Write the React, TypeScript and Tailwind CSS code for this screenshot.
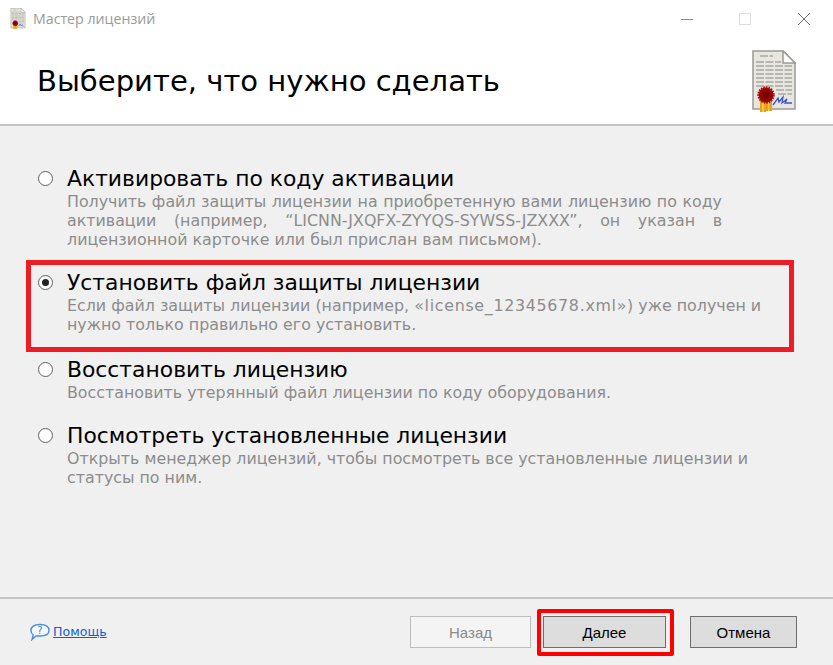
import React from "react";

const body = "font-['DejaVu_Sans',sans-serif]";
const ui = "font-['Liberation_Sans',sans-serif]";

const DocIcon = ({ small = false }: { small?: boolean }) => (
  <svg width={small ? 16 : 44} height={small ? 21 : 62} viewBox="0 0 44 62">
    <path d="M1 1H31L43 13V59H1Z" fill="#e8e6e1" stroke="#9a9a96" strokeWidth="1.5" />
    <path d="M31 1V13H43Z" fill="#fff" stroke="#9a9a96" strokeWidth="1.5" />
    <path d="M8 6H21M4 12H29M4 16H40M4 20H40M4 24H40M4 28H40M4 32H40M4 36H40M24 40H40M26 44H40" stroke="#8a8882" strokeWidth="1.2" strokeDasharray="8 1.5" />
    <path d="M8 48H14V62H8ZM14 48H20V61H14Z" fill="#f19a1c" />
    <path d="M10 48H12V62H10ZM16 48H17.5V61H16Z" fill="#e6d23b" />
    <circle cx="14" cy="45" r="7.5" fill="#8f0606" stroke="#a80c0c" strokeWidth="2.5" strokeDasharray="1.5 1" />
    <circle cx="14" cy="45" r="3" fill="#760404" />
    <path d="M21 55L26 48L27 52L31 47L30 53L35 49L33 53H40" fill="none" stroke="#3c55c8" strokeWidth="1.3" />
  </svg>
);

const Radio = ({ checked = false }: { checked?: boolean }) => (
  <span className="ml-[2px] flex h-[15px] w-[15px] shrink-0 items-center justify-center rounded-full border border-[#5f5f5f] bg-white">
    {checked && <span className="h-[7px] w-[7px] rounded-full bg-[#222]" />}
  </span>
);

const Option = ({
  title,
  checked,
  className,
  children,
}: {
  title: string;
  checked?: boolean;
  className?: string;
  children: React.ReactNode;
}) => (
  <div className={`flex ${className ?? ""}`}>
    <div className="flex h-[27px] w-[31px] shrink-0 items-center">
      <Radio checked={checked} />
    </div>
    <div className="min-w-0 flex-1">
      <div className="h-[27px] text-[21.85px] leading-[27px] text-black whitespace-nowrap">{title}</div>
      <div className="text-[15.85px] leading-[19px] text-[#8c8c8c]">{children}</div>
    </div>
  </div>
);

const Button = ({ label, className }: { label: string; className: string }) => (
  <button className={`h-[32px] border pt-[2px] text-[15px] ${ui} ${className}`}>{label}</button>
);

export default function App() {
  return (
    <div className={`flex h-[665px] w-[833px] flex-col overflow-hidden bg-[#f0f0f0] ${body}`}>
      {/* Title bar */}
      <div className="h-[126px] shrink-0 border-b-2 border-[#c4c4c4] bg-white">
        <div className="flex h-[37px] items-center pl-[10px]">
          <DocIcon small />
          <span className="ml-[7px] font-['Open_Sans',sans-serif] text-[14.2px] text-[#9a9a9a]">Мастер лицензий</span>
          <div className="ml-auto flex items-center">
            <svg width="12" height="12" viewBox="0 0 12 12" className="mr-[46px]"><path d="M0 6.5H12" stroke="#8e8e8e" /></svg>
            <span className="mr-[47px] h-[12px] w-[12px] border border-[#dedede]" />
            <svg width="12" height="12" viewBox="0 0 12 12" className="mr-[23px]"><path d="M0 0L12 12M12 0L0 12" stroke="#6f6f6f" /></svg>
          </div>
        </div>
        <div className="flex pl-[37px] pr-[37px]">
          <h1 className="mt-[26px] text-[29.05px] leading-[36px] font-normal text-black">Выберите, что нужно сделать</h1>
          <div className="ml-auto mt-[13px]"><DocIcon /></div>
        </div>
      </div>

      {/* Options */}
      <div className="flex-1 pl-[36px] pr-[71px] pt-[39px]">
        <Option title="Активировать по коду активации">
          <p className="w-[655px] text-justify">
            Получить файл защиты лицензии на приобретенную вами лицензию по коду активации (например, “LICNN-JXQFX-ZYYQS-SYWSS-JZXXX”, он указан в лицензионной карточке или был прислан вам письмом).
          </p>
        </Option>
        <div className="relative mt-[20px]">
          <Option title="Установить файл защиты лицензии" checked>
            <div className="whitespace-nowrap">
              Если файл защиты лицензии (например, <span className="tracking-[0.7px]">«license_12345678.xml»</span>) уже получен и
            </div>
            <div>нужно только правильно его установить.</div>
          </Option>
          <div className="pointer-events-none absolute -left-[10px] -right-[32px] -top-[9px] -bottom-[18px] border-[5px] border-[#ee1c25]" />
        </div>
        <Option title="Восстановить лицензию" className="mt-[22px]">
          Восстановить утерянный файл лицензии по коду оборудования.
        </Option>
        <Option title="Посмотреть установленные лицензии" className="mt-[20px]">
          Открыть менеджер лицензий, чтобы посмотреть все установленные лицензии и статусы по ним.
        </Option>
      </div>

      {/* Footer */}
      <div className="flex h-[68px] shrink-0 items-center border-t-2 border-[#c4c4c4] pl-[30px] pr-[36px]">
        <svg width="20" height="18" viewBox="0 0 20 18">
          <path d="M10 1.5C15 1.5 19 3.5 19 7.5S15 13 10 13H6L2 16.5L3.2 12C1.8 11 1 9.5 1 7.5C1 3.5 5 1.5 10 1.5Z" fill="#f4f8fc" stroke="#4a90d9" strokeWidth="1.4" />
          <text x="10" y="11" textAnchor="middle" fontSize="10" fill="#4a7fb8" fontFamily="DejaVu Sans">?</text>
        </svg>
        <a className="ml-[3px] text-[12.6px] text-[#0f5fd0] underline">Помощь</a>
        <div className="ml-auto flex items-center">
          <Button label="Назад" className="w-[121px] border-[#bcbcbc] bg-[#f4f4f4] text-[#8a8a8a]" />
          <div className="relative ml-[12px]">
            <Button label="Далее" className="w-[123px] border-[#6e6e6e] bg-[#dddddd] text-black" />
            <div className="pointer-events-none absolute -left-[6px] -right-[8px] -top-[7px] -bottom-[8px] rounded-[2px] border-[4px] border-[#ff0000]" />
          </div>
          <Button label="Отмена" className="ml-[24px] w-[107px] border-[#6e6e6e] bg-[#dddddd] text-black" />
        </div>
      </div>
    </div>
  );
}
